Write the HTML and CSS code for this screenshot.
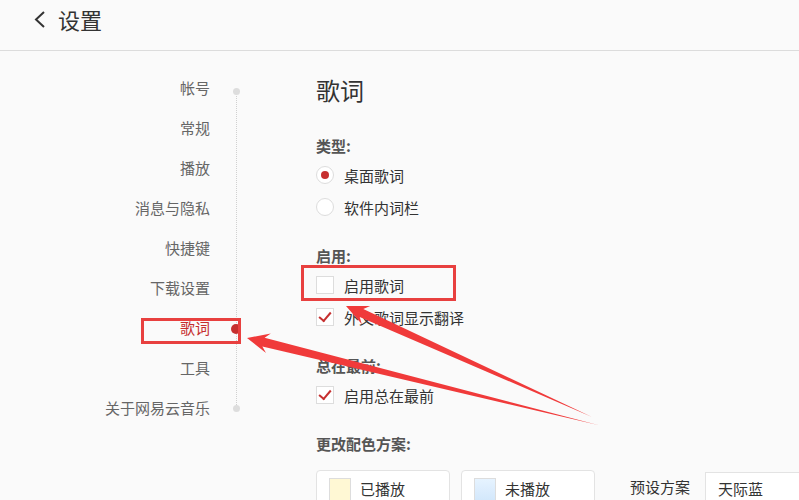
FILE: index.html
```html
<!DOCTYPE html>
<html lang="zh-CN">
<head>
	<meta charset="UTF-8">
	<title>设置</title>
	<link rel="stylesheet" href="styles.css">
</head>
<body>
	<!-- 顶部标题 -->
	<div class="header">
		<svg class="back" width="14" height="20" viewBox="0 0 14 20"><path d="M11 2 L3 9.5 L11 17" fill="none" stroke="#333" stroke-width="2"/></svg>
		<h1>设置</h1>
	</div>
	<div class="main">
		<!-- 左侧导航 -->
		<ul class="nav">
			<li class="first">帐号</li>
			<li>常规</li>
			<li>播放</li>
			<li>消息与隐私</li>
			<li>快捷键</li>
			<li>下载设置</li>
			<li class="current">歌词</li>
			<li>工具</li>
			<li class="last">关于网易云音乐</li>
		</ul>
		<!-- 右侧内容 -->
		<div class="content">
			<h2>歌词</h2>
			<div class="label">类型:</div>
			<div class="opt"><i class="radio on"></i>桌面歌词</div>
			<div class="opt"><i class="radio"></i>软件内词栏</div>
			<div class="label">启用:</div>
			<div class="opt"><i class="check"></i>启用歌词</div>
			<div class="opt"><i class="check on"></i>外文歌词显示翻译</div>
			<div class="label">总在最前:</div>
			<div class="opt"><i class="check on"></i>启用总在最前</div>
			<div class="label">更改配色方案:</div>
			<div class="colors">
				<div class="swatch"><i class="played"></i>已播放</div>
				<div class="swatch"><i class="unplayed"></i>未播放</div>
				<span class="preset">预设方案</span>
				<div class="select">天际蓝</div>
			</div>
		</div>
	</div>
	<!-- 标注 -->
	<svg class="marks" width="799" height="500" viewBox="0 0 799 500">
		<rect x="142.5" y="319.5" width="97" height="23" fill="none" stroke="#e8403f" stroke-width="3"/>
		<rect x="302.5" y="266.5" width="152" height="33" fill="none" stroke="#e8403f" stroke-width="3"/>
		<polygon points="346,306 370.2,305.9 363.3,309 592,417 359.7,317 361.9,324.2" fill="#f03a3a"/>
		<polygon points="247,338 270.8,333.6 264.6,337.8 598,425 262.4,346.4 266,353" fill="#f03a3a"/>
	</svg>
</body>
</html>
```
FILE: styles.css
```css
*{padding:0;margin:0;}
ul,li{list-style:none;}
body{background:#fafafa;font-family:"Noto Sans CJK SC","Microsoft YaHei",sans-serif;color:#333;width:799px;height:500px;overflow:hidden;position:relative;}
.header{height:51px;border-bottom:1px solid #dcdcdc;display:flex;align-items:flex-start;padding-left:33px;box-sizing:border-box;}
.back{margin-top:10px;}
.header h1{font-size:22px;font-weight:normal;line-height:38px;margin-left:11px;}
.main{display:flex;}
/* 导航 时间轴 */
.nav{width:237px;flex-shrink:0;padding-top:17px;position:relative;}
.nav:before{content:"";position:absolute;left:236px;top:40px;height:318px;border-left:1px dotted #d0d0d0;}
.nav li{height:40px;line-height:40px;text-align:right;padding-right:27px;font-size:15px;color:#666;position:relative;}
.nav li.first:after,.nav li.last:after{content:"";position:absolute;width:7px;height:7px;border-radius:50%;background:#ddd;left:233px;top:17px;}
.nav li.first:after{top:20px;}
.nav li.current{color:#c62f2f;}
.nav li.current:after{content:"";position:absolute;width:10px;height:10px;border-radius:50%;background:#c62f2f;left:231px;top:16px;}
.content{flex:1;min-width:0;padding-left:79px;padding-top:23px;font-size:15px;}
.content h2{font-size:24px;font-weight:normal;line-height:32px;}
.label{line-height:20px;color:#555;font-weight:bold;margin-top:23px;margin-bottom:3px;}
h2 + .label{margin-top:30px;}
.opt{height:32px;display:flex;align-items:center;color:#333;}
.opt i{width:18px;height:18px;box-sizing:border-box;border:1px solid #ddd;background:#fff;margin-right:10px;position:relative;}
.radio{border-radius:50%;}
.radio.on:after{content:"";position:absolute;width:8px;height:8px;border-radius:50%;background:#c62f2f;left:4px;top:4px;}
.check.on:after{content:"";position:absolute;width:10px;height:5px;border-left:2px solid #c62f2f;border-bottom:2px solid #c62f2f;transform:rotate(-50deg);left:2px;top:3px;}
.colors{display:flex;align-items:flex-start;margin-top:16px;}
.colors > *{flex-shrink:0;}
.swatch{width:134px;height:42px;box-sizing:border-box;border:1px solid #e3e3e3;border-radius:4px;background:#fff;display:flex;align-items:flex-start;padding:7px 0 0 12px;margin-right:11px;line-height:22px;}
.swatch i{width:22px;height:24px;box-sizing:border-box;border:1px solid #ddd;margin-right:9px;}
.played{background:#fff8d4;}
.unplayed{background:linear-gradient(#e6f3ff,#d2e7fb);}
.preset{margin-left:24px;margin-top:6px;line-height:22px;}
.select{margin-left:15px;margin-top:2px;width:94px;height:40px;box-sizing:border-box;border:1px solid #e3e3e3;border-right:none;background:#fff;padding:5px 0 0 12px;line-height:22px;}
.marks{position:absolute;left:0;top:0;pointer-events:none;}
```
